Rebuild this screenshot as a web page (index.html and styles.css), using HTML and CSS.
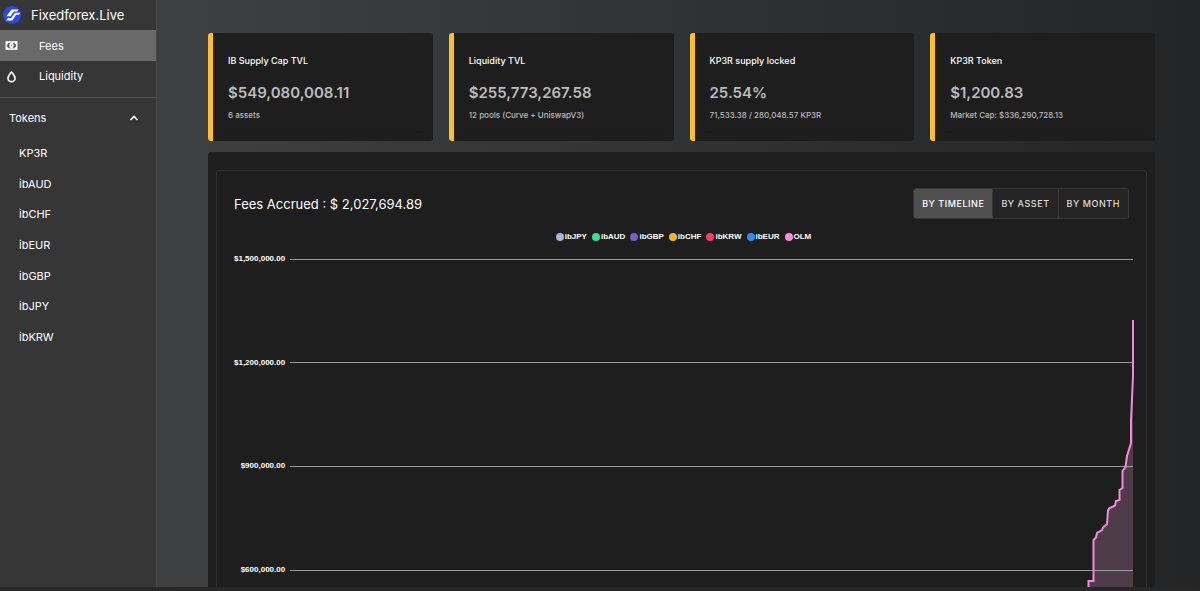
FILE: index.html
```html
<!DOCTYPE html>
<html lang="en">
<head>
    <meta charset="utf-8">
    <title>Fixedforex.Live</title>
    <link rel="stylesheet" href="styles.css">
</head>
<body>
    <div class="layout">
        <nav class="sidebar">
            <a class="brand" href="#">
                <svg class="logo" viewBox="0 0 18 18">
                    <circle cx="9" cy="9" r="9" fill="#2b48e6"/>
                    <path d="M8.500 3.500h7l-1.500 2h-3L7.500 10.200H3.300z" fill="#fff"/>
                    <path d="M17.600 6.700h-5.600L8.200 12H5l-2 2.500h6.200l4-5.700h2.600z" fill="#fff"/>
                </svg>
                <span>Fixedforex.Live</span>
            </a>
            <a class="nav-item active" href="#fees">
                <svg class="nav-icon" viewBox="0 0 24 24">
                    <rect x="1" y="4" width="22" height="16" fill="#fff"/>
                    <path d="M7 7h10l3 3v4l-3 3H7l-3-3v-4z" fill="#555"/>
                    <rect x="8" y="7" width="8" height="10" rx="4" fill="#fff"/>
                    <rect x="11" y="10" width="2" height="4" rx="1" fill="#888"/>
                </svg>
                <span>Fees</span>
            </a>
            <a class="nav-item short" href="#liquidity">
                <svg class="nav-icon" viewBox="0 0 24 24">
                    <path d="M12 3.500C9 7.500 5.500 11 5.500 15a6.500 6.500 0 0 0 13 0c0-4-3.500-7.500-6.500-11.500z" fill="none" stroke="#fff" stroke-width="3"/>
                </svg>
                <span>Liquidity</span>
            </a>
            <button class="group-toggle" type="button" aria-expanded="true">
                <span>Tokens</span>
                <svg class="chevron" viewBox="0 0 10 10">
                    <path d="M1.500 7L5 3.500 8.500 7" fill="none" stroke="#fff" stroke-width="1.600"/>
                </svg>
            </button>
            <div class="token-list">
                <a href="#kp3r">KP3R</a>
                <a href="#ibaud">ibAUD</a>
                <a href="#ibchf">ibCHF</a>
                <a href="#ibeur">ibEUR</a>
                <a href="#ibgbp">ibGBP</a>
                <a href="#ibjpy">ibJPY</a>
                <a href="#ibkrw">ibKRW</a>
            </div>
        </nav>

        <main class="content">
            <section class="cards">
                <div class="card">
                    <div class="card-body">
                        <h2>IB Supply Cap TVL</h2>
                        <p class="value">$549,080,008.11</p>
                        <p class="note">6 assets</p>
                    </div>
                </div>
                <div class="card">
                    <div class="card-body">
                        <h2>Liquidity TVL</h2>
                        <p class="value">$255,773,267.58</p>
                        <p class="note">12 pools (Curve + UniswapV3)</p>
                    </div>
                </div>
                <div class="card">
                    <div class="card-body">
                        <h2>KP3R supply locked</h2>
                        <p class="value">25.54%</p>
                        <p class="note">71,533.38 / 280,048.57 KP3R</p>
                    </div>
                </div>
                <div class="card">
                    <div class="card-body">
                        <h2>KP3R Token</h2>
                        <p class="value">$1,200.83</p>
                        <p class="note">Market Cap: $336,290,728.13</p>
                    </div>
                </div>
            </section>

            <section class="panel">
                <div class="panel-body">
                    <div class="panel-head">
                        <h1>Fees Accrued : $ 2,027,694.89</h1>
                        <div class="toggle">
                            <button class="selected" type="button">BY TIMELINE</button>
                            <button type="button">BY ASSET</button>
                            <button type="button">BY MONTH</button>
                        </div>
                    </div>
                    <ul class="legend">
                        <li class="jpy">ibJPY</li>
                        <li class="aud">ibAUD</li>
                        <li class="gbp">ibGBP</li>
                        <li class="chf">ibCHF</li>
                        <li class="krw">ibKRW</li>
                        <li class="eur">ibEUR</li>
                        <li class="olm">OLM</li>
                    </ul>
                    <div class="chart">
                        <div class="axis">
                            <span>$1,500,000.00</span>
                            <span>$1,200,000.00</span>
                            <span>$900,000.00</span>
                            <span>$600,000.00</span>
                        </div>
                        <svg class="plot" viewBox="0 0 843 520" preserveAspectRatio="none">
                            <path class="area" d="M0 520V519H780V400H798.500V322H803.500V281L806 278.500 807 274 812 271 813 268.500 817 265 818 251.500 819 249.500 825 246.500 826 242 829.500 241V231L832.500 229V212L835.500 208 837 197 841 184V161L842 140 843 117V520z"/>
                            <path class="grid" d="M0 .5H843M0 103.500H843M0 207.500H843M0 311.500H843M0 415.500H843"/>
                            <path class="line" d="M0 519H780V400H798.500V322H803.500V281L806 278.500 807 274 812 271 813 268.500 817 265 818 251.500 819 249.500 825 246.500 826 242 829.500 241V231L832.500 229V212L835.500 208 837 197 841 184V161L842 140 843 117V61"/>
                        </svg>
                    </div>
                </div>
            </section>
        </main>
    </div>
    <footer class="bottom-bar"></footer>
</body>
</html>
```
FILE: styles.css
```css
* {
    box-sizing: border-box;
}
body {
    margin: 0;
    height: 100vh;
    display: flex;
    flex-direction: column;
    overflow: hidden;
    background-color: #272727;
    color: #fff;
    font-family: Inter, sans-serif;
    font-size: 11px;
}
h1, h2, p, ul {
    margin: 0;
    padding: 0;
}
a {
    color: inherit;
    text-decoration: none;
}
button {
    font-family: inherit;
    color: inherit;
    background: none;
    border: none;
    cursor: pointer;
}
.layout {
    flex: 1;
    min-height: 0;
    display: flex;
    overflow: hidden;
}
.bottom-bar {
    height: 4px;
    background-color: #272727;
}

/* Sidebar */
.sidebar {
    width: 157px;
    flex-shrink: 0;
    background-color: #363636;
    border-right: 1px solid #484848;
}
.brand {
    display: flex;
    align-items: center;
    gap: 10px;
    height: 30px;
    padding-left: 3px;
    font-size: 13px;
}
.logo {
    width: 18px;
    height: 18px;
}
.nav-item {
    display: flex;
    align-items: center;
    gap: 21px;
    height: 31px;
    padding-left: 5px;
}
.nav-item.short {
    height: 30px;
}
.nav-item.active {
    background-color: #696969;
}
.nav-icon {
    width: 13px;
    height: 13px;
}
.group-toggle {
    display: flex;
    align-items: center;
    justify-content: space-between;
    width: 100%;
    height: 41px;
    margin-top: 6px;
    padding: 0 17px 0 9px;
    border-top: 1px solid #555;
    font-size: 11px;
}
.chevron {
    width: 10px;
    height: 10px;
}
.token-list {
    display: grid;
    grid-template-rows: repeat(7, 1fr);
    height: 214px;
    padding-left: 19px;
}
.token-list a {
    display: flex;
    align-items: center;
}

/* Content */
.content {
    flex: 1;
    min-width: 0;
    padding: 33px 45px 0 51px;
    background: linear-gradient(90deg, #3f4042, #303234 50%, #242527);
}
.cards {
    display: grid;
    grid-template-columns: repeat(4, 1fr);
    gap: 16px;
    margin-bottom: 11px;
}
.card {
    padding: 12px 10px 10px 10px;
    border-left: 5px solid #fec029;
    border-radius: 3px;
    background-color: #1e1e1e;
}
.card-body {
    height: 86px;
    padding: 9px 5px;
    border-radius: 3px;
    box-shadow: 0 1px 2px rgba(0, 0, 0, 0.15);
}
.card h2 {
    font-size: 9px;
    font-weight: 500;
    line-height: 14px;
}
.value {
    margin-top: 15px;
    color: #bbb;
    font-size: 15px;
    font-weight: 600;
    line-height: 20px;
}
.note {
    margin-top: 5px;
    color: #bbb;
    font-size: 8px;
    font-weight: 500;
    line-height: 14px;
}
.panel {
    padding: 18px 8px;
    border-radius: 3px;
    background-color: #1e1e1e;
}
.panel-body {
    padding: 17px 13px 18px 17px;
    border: 1px solid #303030;
    border-radius: 3px;
}
.panel-head {
    display: flex;
    align-items: center;
    justify-content: space-between;
    padding-right: 4px;
}
.panel-head h1 {
    font-size: 13px;
    font-weight: 400;
}
.toggle {
    display: flex;
    border: 1px solid #373737;
    border-radius: 3px;
    overflow: hidden;
}
.toggle button {
    height: 29px;
    padding: 0 8px;
    background-color: #252525;
    color: #ddd;
    font-size: 9px;
    font-weight: 500;
    letter-spacing: 0.06em;
}
.toggle button + button {
    border-left: 1px solid #373737;
}
.toggle .selected {
    background-color: #505050;
    color: #fff;
}

/* Chart */
.legend {
    display: flex;
    justify-content: center;
    gap: 5px;
    margin-top: 13px;
    list-style: none;
    font-family: "Liberation Sans", sans-serif;
    font-size: 8px;
    font-weight: bold;
    line-height: 10px;
}
.legend li {
    display: flex;
    align-items: center;
    gap: 1px;
}
.legend li::before {
    content: "";
    width: 8px;
    height: 8px;
    border-radius: 50%;
    background-color: currentColor;
}
.legend .jpy::before { background-color: #a5b8d8; }
.legend .aud::before { background-color: #31e397; }
.legend .gbp::before { background-color: #775dd0; }
.legend .chf::before { background-color: #feb02c; }
.legend .krw::before { background-color: #fb3b61; }
.legend .eur::before { background-color: #2690fb; }
.legend .olm::before { background-color: #fb8be0; }
.chart {
    display: flex;
    gap: 6px;
    margin-top: 17px;
}
.axis {
    display: grid;
    grid-template-rows: repeat(4, 1fr);
    width: 50px;
    height: 414px;
    margin-top: -6px;
    font-family: "Liberation Sans", sans-serif;
    font-size: 8px;
    font-weight: bold;
    line-height: 12px;
    text-align: right;
}
.plot {
    flex: 1;
    min-width: 0;
    height: 520px;
    overflow: visible;
}
.grid {
    fill: none;
    stroke: #999;
    stroke-width: 1;
}
.area {
    fill: #4e3c49;
}
.line {
    fill: none;
    stroke: #f787dc;
    stroke-width: 2;
    vector-effect: non-scaling-stroke;
}
```
